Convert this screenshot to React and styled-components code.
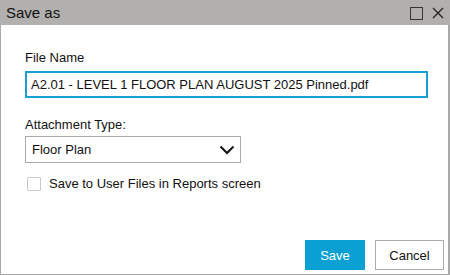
import React from "react"
import styled, { createGlobalStyle } from "styled-components"

const Global = createGlobalStyle`
  html, body { margin: 0; padding: 0; background: #fff; }
  body { font-family: "Liberation Sans", Arial, sans-serif; }
`

const SaveAsDialog = () => (
  <Window>
    <Global />
    <TitleBar>
      <Title>Save as</Title>
      <WinButtons>
        <MaxIcon />
        <svg width="12" height="12" viewBox="0 0 12 12">
          <path d="M1 1 L11 11 M11 1 L1 11" stroke="#222" strokeWidth="1.3" />
        </svg>
      </WinButtons>
    </TitleBar>

    <Body>
      <Field>
        <Label $space={6}>File Name</Label>
        <TextInput defaultValue="A2.01 - LEVEL 1 FLOOR PLAN AUGUST 2025 Pinned.pdf" />
      </Field>

      <Field $gap>
        <Label $space={4}>Attachment Type:</Label>
        <Select>
          <span>Floor Plan</span>
          <svg width="16" height="10" viewBox="0 0 16 10">
            <path d="M1.5 1.5 L8 8 L14.5 1.5" stroke="#111" strokeWidth="2" fill="none" />
          </svg>
        </Select>
      </Field>

      <CheckRow>
        <Box />
        <span>Save to User Files in Reports screen</span>
      </CheckRow>

      <Footer>
        <Button $primary>Save</Button>
        <Button>Cancel</Button>
      </Footer>
    </Body>
  </Window>
)

const Window = styled.div`
  width: 450px;
  height: 275px;
  display: flex;
  flex-direction: column;
  box-sizing: border-box;
  font-size: 13px;
  color: #111;
`

const TitleBar = styled.div`
  height: 25px;
  background: #b1b0ae;
  display: flex;
  align-items: center;
  justify-content: space-between;
  padding: 0 6px 0 6px;
  flex-shrink: 0;
`

const Title = styled.div`
  font-size: 15px;
  color: #111;
`

const WinButtons = styled.div`
  display: flex;
  align-items: center;
  gap: 9px;
  padding-top: 1px;
`

const MaxIcon = styled.div`
  width: 11px;
  height: 11px;
  border: 1.5px solid #333;
`

const Body = styled.div`
  flex: 1;
  display: flex;
  flex-direction: column;
  border: 1px solid #a8a8a8;
  border-top: none;
  border-right-width: 2px;
  padding: 25px 4px 4px 24px;
`

const Field = styled.div`
  display: flex;
  flex-direction: column;
  margin-top: ${p => (p.$gap ? "19px" : "0")};
`

const Label = styled.div`
  font-size: 13px;
  line-height: 15px;
  margin-bottom: ${p => p.$space}px;
`

const TextInput = styled.input`
  box-sizing: border-box;
  width: 403px;
  height: 27px;
  border: 2px solid #1a9fd4;
  padding: 0 4px;
  font-family: inherit;
  font-size: 13px;
  color: #111;
  outline: none;
`

const Select = styled.div`
  box-sizing: border-box;
  width: 216px;
  height: 27px;
  border: 1px solid #aaa;
  display: flex;
  align-items: center;
  justify-content: space-between;
  padding: 0 5px 0 6px;
`

const CheckRow = styled.div`
  display: flex;
  align-items: center;
  gap: 8px;
  margin-top: 13px;
  padding-left: 2px;
`

const Box = styled.div`
  width: 14px;
  height: 14px;
  box-sizing: border-box;
  border: 1px solid #c8c8c8;
  border-radius: 1px;
`

const Footer = styled.div`
  margin-top: auto;
  display: flex;
  justify-content: flex-end;
  gap: 10px;
`

const Button = styled.button`
  box-sizing: border-box;
  height: 30px;
  min-width: ${p => (p.$primary ? "60px" : "69px")};
  font-family: inherit;
  font-size: 13px;
  background: ${p => (p.$primary ? "#0aa0d3" : "#fff")};
  color: ${p => (p.$primary ? "#fff" : "#111")};
  border: ${p => (p.$primary ? "none" : "1px solid #aaa")};
  padding: 0 10px;
`

export default SaveAsDialog
